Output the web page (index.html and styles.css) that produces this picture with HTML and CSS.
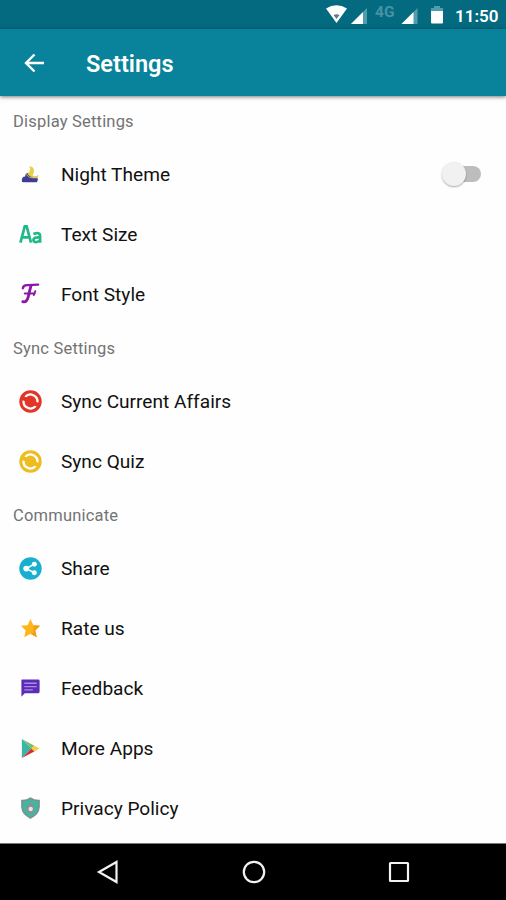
FILE: index.html
```html
<!DOCTYPE html>
<html lang="en">
<head>
<meta charset="utf-8">
<title>Settings</title>
<link rel="stylesheet" href="styles.css">
</head>
<body>
<div class="screen">
  <div class="status">
    <svg class="status-icons" width="132" height="29" viewBox="0 0 132 29">
      <path d="M0 8.5Q10.500 2 21 8.500L10.500 23Z" fill="#fff"/>
      <path d="M7.500 15Q10.500 13.500 13.500 15L10.500 19Z" fill="#657c84"/>
      <path d="M41 8V24H25Z" fill="#4f9eae"/><path d="M37 12V24H25Z" fill="#fff"/>
      <path d="M91.500 8V24H75.500Z" fill="#4f9eae"/><path d="M87.500 12V24H75.500Z" fill="#fff"/>
      <path d="M105 11V8H108V6H114V8H117V11Z" fill="#4f9eae"/><path d="M105 11H117V22.500Q117 23.500 116 23.500H106Q105 23.500 105 22.500Z" fill="#fff"/>
      <text class="network" x="49" y="16.500">4G</text>
    </svg>
    <span class="clock">11:50</span>
  </div>
  <header class="appbar">
    <svg class="back" width="22" height="22" viewBox="0 0 22 22"><path d="M21 11H3M11.500 2.500L3 11L11.500 19.500" fill="none" stroke="#fff" stroke-width="2.400"/></svg>
    <h1>Settings</h1>
  </header>
  <main>
    <section>
      <h2>Display Settings</h2>
      <div class="row">
        <svg class="icon" viewBox="0 0 24 24"><path d="M3 19Q2.500 14 6.500 14Q6.500 10 10 10.500L12 14L19 14.500Q20.500 17 18.500 20H4.500Q3 20 3 19Z" fill="#3e3c93"/><path d="M11 3.500Q14 8.500 8 11Q10 16 15 14.500L20.500 12.500L19 16H14Q8 15 7.500 11Q13 9 11 3.500Z" fill="#e2c84a"/><path d="M11 3.500Q16.500 4 15.500 9.500L14 14Q10 14 9 11Q13 9 11 3.500Z" fill="#e8cf47"/></svg>
        <span class="label">Night Theme</span><span class="switch"></span>
      </div>
      <div class="row">
        <svg class="icon" viewBox="0 0 24 24"><g fill="none" stroke="#20b889" stroke-width="2.800"><path d="M1.500 20.500L6 3.500H8L12.500 20.500M3.500 15H10.500"/><path d="M15 11.500Q22 9 22 13.500V20.500M22 15Q15 14.500 15 17.800C15 21 20.500 20.500 22 17.500"/></g></svg>
        <span class="label">Text Size</span>
      </div>
      <div class="row">
        <svg class="icon" viewBox="0 0 24 24"><g fill="none" stroke="#8d16a7" stroke-linecap="round"><path d="M4 5.500Q4.500 2 9 2.200L20 1.800" stroke-width="2.400"/><path d="M12.500 3Q11 8 10 13Q8.500 21 4 19.500" stroke-width="3"/><path d="M6 11H16.500M17 8.500L15.500 12.500" stroke-width="2"/></g></svg>
        <span class="label">Font Style</span>
      </div>
    </section>
    <section>
      <h2>Sync Settings</h2>
      <div class="row">
        <svg class="icon red" viewBox="0 0 24 24"><circle class="disc" cx="12" cy="12" r="11.700"/><path class="gap" d="M4.800 11A7.300 7.300 0 0 0 17.500 16.800M19.200 13A7.300 7.300 0 0 0 6.500 7.200"/><path class="disc" d="M5.500 7L10 8V13L5.500 11.500ZM18.500 17L14 16V11L18.500 12.500Z"/></svg>
        <span class="label">Sync Current Affairs</span>
      </div>
      <div class="row">
        <svg class="icon yellow" viewBox="0 0 24 24"><circle class="disc" cx="12" cy="12" r="11.700"/><path class="gap" d="M4.800 11A7.300 7.300 0 0 0 17.500 16.800M19.200 13A7.300 7.300 0 0 0 6.500 7.200"/><path class="disc" d="M5.500 7L10 8V13L5.500 11.500ZM18.500 17L14 16V11L18.500 12.500Z"/></svg>
        <span class="label">Sync Quiz</span>
      </div>
    </section>
    <section>
      <h2>Communicate</h2>
      <div class="row">
        <svg class="icon" viewBox="0 0 24 24"><circle cx="12" cy="12" r="11.700" fill="#19b0cf"/><path d="M16 7.500L7.500 12L16 16.500" fill="none" stroke="#fff" stroke-width="1.600"/><g fill="#fff"><circle cx="7.500" cy="12" r="3"/><circle cx="16" cy="7.500" r="2.600"/><circle cx="16" cy="16.500" r="2.600"/></g></svg>
        <span class="label">Share</span>
      </div>
      <div class="row">
        <svg class="icon" viewBox="0 0 24 24"><path d="M12 2L15 8.500L22 9.200L17 14L18.500 21.200L12 17.500L5.500 21.200L7 14L2 9.200L9 8.500Z" fill="#fdb51b"/><path d="M15 8.500L22 9.200L17 14L18.500 21.200L12 17.500L15.500 16.500Z" fill="#f39d16"/></svg>
        <span class="label">Rate us</span>
      </div>
      <div class="row">
        <svg class="icon" viewBox="0 0 24 24"><path d="M3 2.500H20Q21.500 2.500 21.500 4V15.500Q21.500 17 20 17H6L2.500 20.500V3.500Q2.500 2.500 3 2.500Z" fill="#5c2bb7"/><path d="M5.500 6.500H18.500M5.500 10H18.500M5.500 13.500H14.500" stroke="#a98de0" stroke-width="1.400"/></svg>
        <span class="label">Feedback</span>
      </div>
      <div class="row">
        <svg class="icon" viewBox="0 0 24 24"><path d="M3 2V22L13 12Z" fill="#3bb5a5"/><path d="M3 2L16 9L13 12Z" fill="#77bd69"/><path d="M16 9L21.500 12L16 15L13 12Z" fill="#f6cf43"/><path d="M3 22L13 12L16 15Z" fill="#d52f36"/></svg>
        <span class="label">More Apps</span>
      </div>
      <div class="row">
        <svg class="icon" viewBox="0 0 24 24"><path d="M12 1Q16 4 21 3.700V10.500Q20.500 18 12 22Q3.500 18 3 10.500V3.700Q8 4 12 1Z" fill="#43b69d" stroke="#808e94" stroke-width="1.500"/><path d="M12 5.500Q12.500 8.500 15.500 9.500V14.500L12 17.500L8.500 14.500V9.500Q11.500 8.500 12 5.500Z" fill="#9c8795"/><circle cx="12.200" cy="12.500" r="2.300" fill="#eee2e7"/></svg>
        <span class="label">Privacy Policy</span>
      </div>
    </section>
  </main>
  <nav>
    <svg width="24" height="24" viewBox="0 0 24 24"><path d="M20.500 2V22L3 12Z"/></svg>
    <svg width="24" height="24" viewBox="0 0 24 24"><circle cx="12" cy="12" r="10.200"/></svg>
    <svg width="24" height="24" viewBox="0 0 24 24"><rect x="3" y="3" width="18" height="18" rx=".5"/></svg>
  </nav>
</div>
</body>
</html>
```
FILE: styles.css
```css
* { box-sizing: border-box; }
body { margin: 0; font-family: Roboto, sans-serif; background: #fefefe; }
.screen { width: 506px; height: 900px; display: flex; flex-direction: column; overflow: hidden; }
.status { height: 29px; flex: none; background: #046a7f; display: flex; align-items: center; justify-content: flex-end; padding-right: 8px; }
.network { font: 700 15.500px Roboto, sans-serif; fill: #4593a4; }
.clock { width: 43px; margin-left: -3px; margin-top: 3px; font-size: 17px; font-weight: 600; color: #fff; white-space: nowrap; }
.appbar { height: 67px; flex: none; background: #08839b; display: flex; align-items: center; padding-left: 23px; gap: 41px; box-shadow: 0 1px 4px #0008; }
h1 { margin: 2px 0 0; font-size: 23.500px; font-weight: 600; color: #fff; }
main { flex: 1; }
h2 { margin: 0; height: 47px; display: flex; align-items: center; padding: 1px 0 0 13px; font-size: 16.500px; font-weight: 400; color: #737373; letter-spacing: .2px; }
section:first-child h2 { height: 48px; padding-top: 2px; }
.row { height: 60px; display: flex; align-items: center; padding: 0 25px 0 19px; }
.icon { width: 23px; height: 23px; flex: none; }
.label { margin-left: 19px; padding-top: 1px; font-size: 19.100px; color: #111; }
.disc { fill: currentColor; }
.gap { fill: none; stroke: #fff; stroke-width: 2.400; }
.red { color: #e33628; }
.yellow { color: #edbd20; }
.switch { position: relative; margin-left: auto; width: 34px; height: 16px; border-radius: 8px; background: #bdbdbd; }
.switch::before { content: ""; position: absolute; left: -5px; top: -4px; width: 24px; height: 24px; border-radius: 50%; background: #f1f1f1; box-shadow: 0 1px 2px #0005; }
nav { height: 57px; flex: none; background: #000; border-top: 1px solid #777; display: flex; align-items: center; justify-content: space-between; padding: 0 95px 0 96px; }
nav svg { fill: none; stroke: #f2f2f2; stroke-width: 2.200; }
```
